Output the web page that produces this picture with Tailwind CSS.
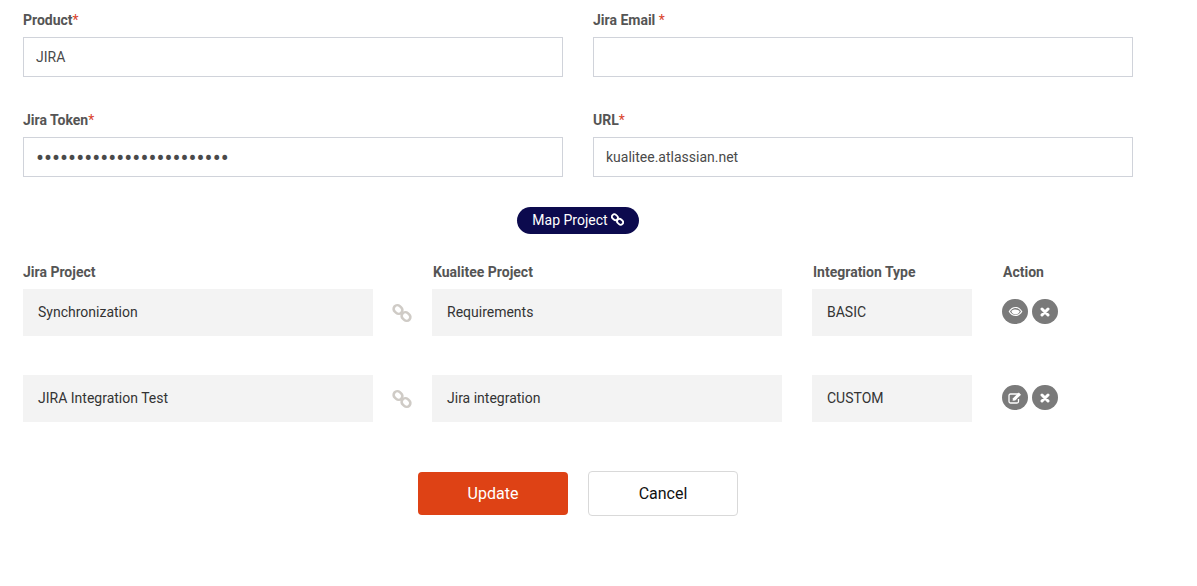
<!DOCTYPE html>
<html lang="en">
<head>
    <meta charset="UTF-8">
    <meta name="viewport" content="width=device-width, initial-scale=1.0">
    <title>Jira Integration</title>
    <script src="https://cdn.jsdelivr.net/npm/@tailwindcss/browser@4"></script>
</head>
<body class="bg-white font-['Roboto',sans-serif] text-sm text-[#4a4a4a]">
    <main class="w-[1197px] h-[586px] overflow-hidden pl-[23px] pt-[12px]">
        <form>
            <div class="grid grid-cols-[540px_540px] gap-x-[30px] gap-y-[35px]">
                <div>
                    <label class="block h-[25px] leading-[17px] font-bold text-[#555]">Product<span class="text-[#d9432c] font-normal">*</span></label>
                    <input type="text" value="JIRA" class="block w-full h-[40px] border border-[#d0d3da] px-3 text-[#4a4a4a] outline-none">
                </div>
                <div>
                    <label class="block h-[25px] leading-[17px] font-bold text-[#555]">Jira Email <span class="text-[#d9432c] font-normal">*</span></label>
                    <input type="text" class="block w-full h-[40px] border border-[#d0d3da] px-3 text-[#4a4a4a] outline-none">
                </div>
                <div>
                    <label class="block h-[25px] leading-[17px] font-bold text-[#555]">Jira Token<span class="text-[#d9432c] font-normal">*</span></label>
                    <input type="password" value="aaaaaaaaaaaaaaaaaaaaaaaa" class="block w-full h-[40px] border border-[#d0d3da] px-3 pt-[2px] text-[23.8px] text-[#4a4a4a] outline-none">
                </div>
                <div>
                    <label class="block h-[25px] leading-[17px] font-bold text-[#555]">URL<span class="text-[#d9432c] font-normal">*</span></label>
                    <input type="text" value="kualitee.atlassian.net" class="block w-full h-[40px] border border-[#d0d3da] px-3 text-[#4a4a4a] outline-none">
                </div>
            </div>

            <div class="flex justify-center w-[1110px] mt-[30px]">
                <button type="button" class="flex items-center gap-[3px] h-[27px] w-[122px] pb-[2px] justify-center rounded-full bg-[#0c0a4e] text-white">
                    Map Project
                    <svg width="13" height="13" viewBox="0 0 14 14" fill="none" stroke="white" stroke-width="2"><rect x="0.8" y="1.900" width="6.800" height="5.200" rx="2.600" transform="rotate(42 4.200 4.500)"/><rect x="6.400" y="6.900" width="6.800" height="5.200" rx="2.600" transform="rotate(42 9.800 9.500)"/></svg>
                </button>
            </div>

            <div class="grid grid-cols-[350px_59px_350px_30px_160px_30px_auto] mt-[30px] font-bold text-[#555] leading-[17px]">
                <div>Jira Project</div><div></div>
                <div class="pl-px">Kualitee Project</div><div></div>
                <div class="pl-px">Integration Type</div><div></div>
                <div class="pl-px">Action</div>
            </div>

            <div class="grid grid-cols-[350px_59px_350px_30px_160px_30px_auto] mt-[8px] h-[47px] items-center text-[#333]">
                <div class="bg-[#f3f3f3] h-full flex items-center pl-[15px] pb-[2px]">Synchronization</div>
                <div class="flex justify-center">
                    <svg width="20" height="20" viewBox="0 0 20 20" fill="none" stroke="#cfcbc6" stroke-width="2.600" class="-translate-x-px"><rect x="1.400" y="2.800" width="9.200" height="7.400" rx="3.700" transform="rotate(42 6 6.500)"/><rect x="9.400" y="9.800" width="9.200" height="7.400" rx="3.700" transform="rotate(42 14 13.500)"/></svg>
                </div>
                <div class="bg-[#f3f3f3] h-full flex items-center pl-[15px] pb-[2px]">Requirements</div>
                <div></div>
                <div class="bg-[#f3f3f3] h-full flex items-center pl-[15px] pb-[2px]">BASIC</div>
                <div></div>
                <div class="flex gap-[4px] mb-[2px]">
                    <span class="w-[26px] h-[25px] rounded-full bg-[#7a7a7a] flex items-center justify-center">
                        <svg width="15" height="11" viewBox="0 0 16 12"><path d="M0.5 6C2.5 2.6 5 1 8 1s5.500 1.600 7.500 5c-2 3.400-4.500 5-7.500 5S2.500 9.400 0.500 6z" fill="white"/><path d="M2 6C3.600 3.600 5.700 2.200 8 2.200S12.400 3.600 14 6C12.400 8.400 10.300 9.800 8 9.800S3.600 8.400 2 6z" fill="#7a7a7a"/><path d="M3.400 5.500C5 4.300 6.400 3.800 8 3.800s3 .5 4.600 1.700C12 8 10.200 9.200 8 9.200S4 8 3.400 5.500z" fill="white"/></svg>
                    </span>
                    <span class="w-[26px] h-[25px] rounded-full bg-[#7a7a7a] flex items-center justify-center">
                        <svg width="10" height="10" viewBox="0 0 10 10" stroke="white" stroke-width="3" stroke-linecap="round"><path d="M2 2l6 6M8 2l-6 6"/></svg>
                    </span>
                </div>
            </div>

            <div class="grid grid-cols-[350px_59px_350px_30px_160px_30px_auto] mt-[39px] h-[47px] items-center text-[#333]">
                <div class="bg-[#f3f3f3] h-full flex items-center pl-[15px] pb-[2px]">JIRA Integration Test</div>
                <div class="flex justify-center">
                    <svg width="20" height="20" viewBox="0 0 20 20" fill="none" stroke="#cfcbc6" stroke-width="2.600" class="-translate-x-px"><rect x="1.400" y="2.800" width="9.200" height="7.400" rx="3.700" transform="rotate(42 6 6.500)"/><rect x="9.400" y="9.800" width="9.200" height="7.400" rx="3.700" transform="rotate(42 14 13.500)"/></svg>
                </div>
                <div class="bg-[#f3f3f3] h-full flex items-center pl-[15px] pb-[2px]">Jira integration</div>
                <div></div>
                <div class="bg-[#f3f3f3] h-full flex items-center pl-[15px] pb-[2px]">CUSTOM</div>
                <div></div>
                <div class="flex gap-[4px] mb-[2px]">
                    <span class="w-[26px] h-[25px] rounded-full bg-[#7a7a7a] flex items-center justify-center">
                        <svg width="14" height="12" viewBox="0 0 14 12" fill="none"><path d="M10 2H2.500A1.500 1.500 0 0 0 1 3.500v6A1.500 1.500 0 0 0 2.500 11h6.500A1.500 1.500 0 0 0 10.500 9.500V7" stroke="white" stroke-width="1.300"/><path d="M5 6.200L10.800 0.500l2.200 2.200L7.200 8.400 4.600 8.800z" fill="white"/></svg>
                    </span>
                    <span class="w-[26px] h-[25px] rounded-full bg-[#7a7a7a] flex items-center justify-center">
                        <svg width="10" height="10" viewBox="0 0 10 10" stroke="white" stroke-width="3" stroke-linecap="round"><path d="M2 2l6 6M8 2l-6 6"/></svg>
                    </span>
                </div>
            </div>

            <div class="flex justify-center items-center gap-[20px] w-[1110px] mt-[49px] text-base">
                <button type="button" class="w-[150px] h-[43px] rounded-[4px] bg-[#de4215] text-white">Update</button>
                <button type="button" class="w-[150px] h-[45px] rounded-[4px] bg-white border border-[#d9d9d9] text-[#111]">Cancel</button>
            </div>
        </form>
    </main>
</body>
</html>
